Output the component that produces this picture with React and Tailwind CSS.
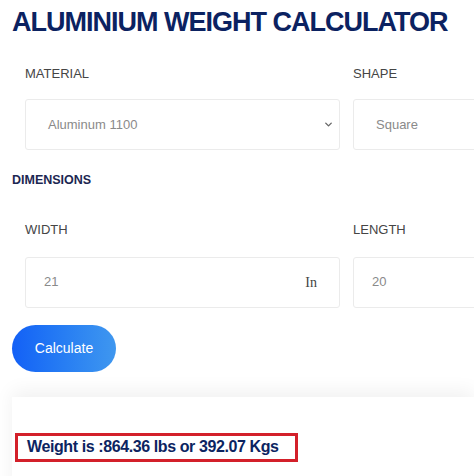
import { ChevronDown } from "lucide-react"

const sans = { fontFamily: "'Liberation Sans', Arial, sans-serif" }

function Field({ label, children }) {
  return (
    <div className="w-[315px] shrink-0">
      <div className="text-[13px] leading-none text-[#454545] h-[14px] pt-[1px]">{label}</div>
      {children}
    </div>
  )
}

export default function App() {
  return (
    <div
      className="w-[474px] h-[476px] overflow-hidden bg-white font-['Liberation_Sans',Arial,sans-serif]"
    >
      <h1 className="pl-[12px] pt-[7px] text-[27px] leading-[30px] font-bold tracking-[-1px] text-[#0b2261]">
        ALUMINIUM WEIGHT CALCULATOR
      </h1>

      <div className="flex gap-[13px] pl-[25px] mt-[29px]">
        <Field label="MATERIAL">
          <div className="mt-[19px] h-[51px] rounded-[3px] border border-[#ebebeb] flex items-center justify-between pl-[22px] pr-[5px] text-[13px] text-[#8a8a8a]">
            <span>Aluminum 1100</span>
            <ChevronDown size={11} strokeWidth={3} className="text-[#666]" />
          </div>
        </Field>
        <Field label="SHAPE">
          <div className="mt-[19px] h-[51px] rounded-[3px] border border-[#ebebeb] flex items-center pl-[22px] text-[13px] text-[#8a8a8a]">
            Square
          </div>
        </Field>
      </div>

      <div className="pl-[12px] mt-[24px] text-[12.5px] leading-none font-bold text-[#1c2752]">
        DIMENSIONS
      </div>

      <div className="flex gap-[13px] pl-[25px] mt-[35px]">
        <Field label="WIDTH">
          <div className="mt-[21px] h-[51px] rounded-[3px] border border-[#ebebeb] flex items-center justify-between pl-[18px] pr-[22px] text-[13px] text-[#8a8a8a]">
            <span>21</span>
            <span className="font-['Liberation_Serif',serif] text-[14px] text-[#444]">In</span>
          </div>
        </Field>
        <Field label="LENGTH">
          <div className="mt-[21px] h-[51px] rounded-[3px] border border-[#ebebeb] flex items-center pl-[18px] text-[13px] text-[#8a8a8a]">
            20
          </div>
        </Field>
      </div>

      <div className="pl-[12px] mt-[17px]">
        <button className="w-[104px] h-[47px] rounded-full bg-gradient-to-r from-[#1460f6] to-[#3f97ef] text-white text-[14px] font-medium">
          Calculate
        </button>
      </div>

      <div className="ml-[12px] mt-[25px] h-[100px] bg-white shadow-[0_-6px_18px_rgba(0,0,0,0.06)] pt-[36px]">
        <div className="ml-[3px] w-[283px] h-[29px] border-[3px] border-[#d3202a] flex items-center pl-[9px]">
          <span className="text-[16px] font-bold tracking-[-0.4px] text-[#0c2461] whitespace-nowrap" style={sans}>
            Weight is :864.36 lbs or 392.07 Kgs
          </span>
        </div>
      </div>
    </div>
  )
}
